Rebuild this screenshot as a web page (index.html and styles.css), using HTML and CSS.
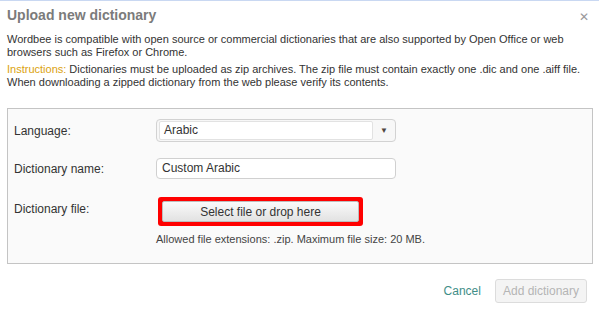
FILE: index.html
```html
<!DOCTYPE html>
<html lang="en">
    <head>
        <meta charset="UTF-8" />
        <title>Upload new dictionary</title>
        <link rel="stylesheet" href="styles.css">
    </head>
    <body>
        <div class="dlg">
            <!-- 제목줄 -->
            <div class="hd">
                <h1 class="ttl">Upload new dictionary</h1>
                <span class="cls">&#x2715;</span>
            </div>

            <p class="txt">Wordbee is compatible with open source or commercial dictionaries that are also supported by Open Office or web browsers such as Firefox or Chrome.</p>
            <p class="txt txt2"><span class="ins">Instructions:</span> Dictionaries must be uploaded as zip archives. The zip file must contain exactly one .dic and one .aiff file. When downloading a zipped dictionary from the web please verify its contents.</p>

            <!-- 입력 박스 -->
            <div class="frm">
                <div class="row r1">
                    <label class="lb">Language:</label>
                    <div class="sel">
                        <span class="selv">Arabic</span>
                        <span class="arw">&#9660;</span>
                    </div>
                </div>
                <div class="row r2">
                    <label class="lb">Dictionary name:</label>
                    <div class="inp">Custom Arabic</div>
                </div>
                <div class="row r3">
                    <label class="lb">Dictionary file:</label>
                    <div class="fcol">
                        <div class="hl">
                            <button class="fbtn">Select file or drop here</button>
                        </div>
                        <div class="note">Allowed file extensions: .zip. Maximum file size: 20 MB.</div>
                    </div>
                </div>
            </div>

            <!-- 하단 버튼 -->
            <div class="ft">
                <a class="cnl">Cancel</a>
                <button class="add" disabled>Add dictionary</button>
            </div>
        </div>
    </body>
</html>
```

FILE: styles.css
```css
body {
    margin: 0;
    background-color: #fff;
    font-family: "Liberation Sans", Arial, sans-serif;
    color: #333;
}

.dlg {
    border-top: 1px solid #c9d8f2;
    padding: 0 6px 0 7px;
}

/* 제목줄 */
.hd {
    display: flex;
    justify-content: space-between;
    align-items: center;
    height: 26px;
    padding-top: 1px;
}
.ttl {
    margin: 0;
    font-size: 14px;
    font-weight: bold;
    color: #7b7b7b;
}
.cls {
    font-size: 12px;
    color: #999;
    margin-right: 4px;
    margin-top: 3px;
}

/* 안내문 */
.txt {
    margin: 5px 0 0;
    font-size: 11px;
    line-height: 13px;
}
.txt2 {
    margin-top: 4px;
}
.ins {
    color: #dba20d;
}

/* 입력 박스 */
.frm {
    margin-top: 19px;
    padding: 10px 6px 17px;
    border: 1px solid #c4c4c4;
    background-color: #fafafa;
}
.row {
    display: flex;
    align-items: flex-start;
}
.lb {
    width: 142px;
    flex-shrink: 0;
    font-size: 12px;
}
.r1 .lb,
.r2 .lb {
    align-self: center;
}
.r2 {
    margin-top: 16px;
}
.r3 {
    margin-top: 18px;
}
.r3 .lb {
    padding-top: 5px;
}

/* 셀렉트 */
.sel {
    display: flex;
    align-items: center;
    box-sizing: border-box;
    width: 240px;
    height: 23px;
    padding: 2px 0 2px 2px;
    border: 1px solid #d2d2d2;
    border-radius: 4px;
    background-color: #f7f7f7;
}
.selv {
    flex: 1;
    box-sizing: border-box;
    height: 19px;
    padding-left: 4px;
    border: 1px solid #e2e2e2;
    border-radius: 2px;
    background-color: #fff;
    font-size: 12px;
    line-height: 17px;
}
.arw {
    width: 22px;
    text-align: center;
    font-size: 8px;
    color: #4e4540;
}

/* 텍스트 입력 */
.inp {
    box-sizing: border-box;
    width: 240px;
    height: 21px;
    padding-left: 5px;
    border: 1px solid #d0d0d0;
    border-radius: 4px;
    background-color: #fff;
    font-size: 12px;
    line-height: 19px;
}

/* 파일 선택 */
.fcol {
    display: flex;
    flex-direction: column;
}
.hl {
    width: 205px;
    margin-left: 2px;
    box-sizing: border-box;
    padding: 4px;
    border-radius: 3px;
    background-color: #f00;
}
.fbtn {
    display: block;
    width: 100%;
    height: 21px;
    padding: 0;
    border: 1px solid #bdbdbd;
    border-radius: 2px;
    background: linear-gradient(#fafafa, #e2e2e2);
    font-family: inherit;
    font-size: 12px;
    color: #333;
}
.note {
    margin-top: 7px;
    font-size: 11px;
    line-height: 13px;
    color: #444;
}

/* 하단 */
.ft {
    display: flex;
    justify-content: flex-end;
    align-items: center;
    gap: 14px;
    margin-top: 15px;
    padding-right: 6px;
}
.cnl {
    font-size: 12px;
    color: #3f8e88;
}
.add {
    height: 24px;
    padding: 0 7px;
    border: 1px solid #dcdcdc;
    border-radius: 3px;
    background-color: #f4f4f4;
    font-family: inherit;
    font-size: 12px;
    color: #b5b5b5;
}
```
